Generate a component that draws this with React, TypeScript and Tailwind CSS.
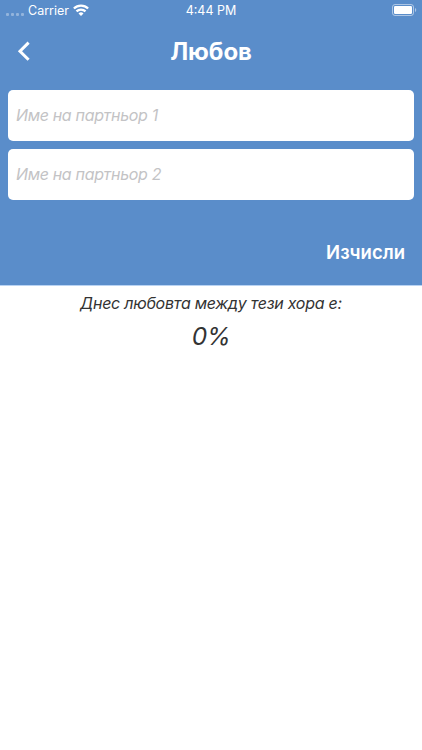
import { useState } from "react";

/** iOS-style status bar: carrier and wifi left, clock centred, battery right. */
function StatusBar() {
  return (
    <div className="grid h-5 grid-cols-3 items-center text-[12.5px] leading-[18px]">
      <div className="flex items-center pl-[6px]">
        <div className="mt-[8px] mr-[4px] flex gap-[2px]">
          {[0, 1, 2, 3].map((dot) => (
            <span key={dot} className="size-[3px] rounded-[1px] bg-white/35" />
          ))}
        </div>
        <span className="w-[40px] pt-[2px] whitespace-nowrap">Carrier</span>
        <svg
          className="ml-[5px]"
          width="16"
          height="12"
          viewBox="0 0 16 12"
          fill="none"
          stroke="currentColor"
          strokeWidth="2.3"
        >
          <path d="M.9 4.5a10.2 10.2 0 0 1 14.2 0" />
          <path d="M3.5 7.4a6.4 6.4 0 0 1 9 0" />
          <path
            d="M8 12 5.5 9.5a3.5 3.5 0 0 1 5 0Z"
            fill="currentColor"
            stroke="none"
          />
        </svg>
      </div>
      <span className="pt-[2px] text-center">4:44 PM</span>
      <svg
        className="mr-[5px] justify-self-end"
        width="25"
        height="12"
        viewBox="0 0 25 12"
        fill="none"
      >
        <rect
          x="0.5"
          y="0.5"
          width="21"
          height="11"
          rx="2.5"
          stroke="white"
          strokeOpacity="0.5"
        />
        <rect x="2" y="2" width="18" height="8" rx="1.2" fill="white" />
        <path d="M23 4v4c1.7-.7 1.7-3.3 0-4Z" fill="white" fillOpacity="0.5" />
      </svg>
    </div>
  );
}

function NameInput({
  placeholder,
  value,
  onChange,
}: {
  readonly placeholder: string;
  readonly value: string;
  readonly onChange: (value: string) => void;
}) {
  return (
    <input
      className="h-[51px] w-full rounded-[5px] bg-white px-[7.5px] pb-[2px] text-base tracking-[-0.32px] text-[#333] italic outline-none placeholder:text-[#c3c3c5]"
      placeholder={placeholder}
      value={value}
      onChange={(e) => {
        onChange(e.target.value);
      }}
    />
  );
}

export default function App() {
  const [first, setFirst] = useState("");
  const [second, setSecond] = useState("");
  const [percent, setPercent] = useState(0);

  const calculate = () => {
    const letters = [...`${first}${second}`.toLowerCase()];
    setPercent(
      letters.reduce((sum, ch) => sum + (ch.codePointAt(0) ?? 0), 0) % 101,
    );
  };

  return (
    <main className="h-[750px] overflow-hidden bg-white font-['Inter','Liberation_Sans',sans-serif] text-[#333]">
      <section className="flex h-[285px] flex-col bg-[#5a8dca] text-white">
        <StatusBar />

        <header className="grid h-[62px] grid-cols-[48px_1fr_48px] items-center">
          <button type="button" aria-label="Назад" className="pl-[17px]">
            <svg
              width="14"
              height="20"
              viewBox="0 0 14 20"
              fill="none"
              stroke="currentColor"
              strokeWidth="3"
            >
              <path d="M11.6 1.6 3 10.2l8.6 8.6" />
            </svg>
          </button>
          <h1 className="pt-[2px] text-center text-2xl font-bold tracking-[-0.1px]">
            Любов
          </h1>
        </header>

        <div className="flex flex-col gap-2 px-[8.4px] pt-[8px]">
          <NameInput
            placeholder="Име на партньор 1"
            value={first}
            onChange={setFirst}
          />
          <NameInput
            placeholder="Име на партньор 2"
            value={second}
            onChange={setSecond}
          />
        </div>

        <button
          type="button"
          className="mt-[38px] mr-[17px] self-end text-[18.5px] leading-7 font-semibold"
          onClick={calculate}
        >
          Изчисли
        </button>
      </section>

      <section className="border-t border-[#b9d3f3] text-center italic">
        <p className="pt-[5px] text-base leading-6 tracking-[-0.27px]">
          Днес любовта между тези хора е:
        </p>
        <p className="pt-[3px] text-[24.5px] leading-9 tracking-[-0.6px]">
          {percent}%
        </p>
      </section>
    </main>
  );
}
